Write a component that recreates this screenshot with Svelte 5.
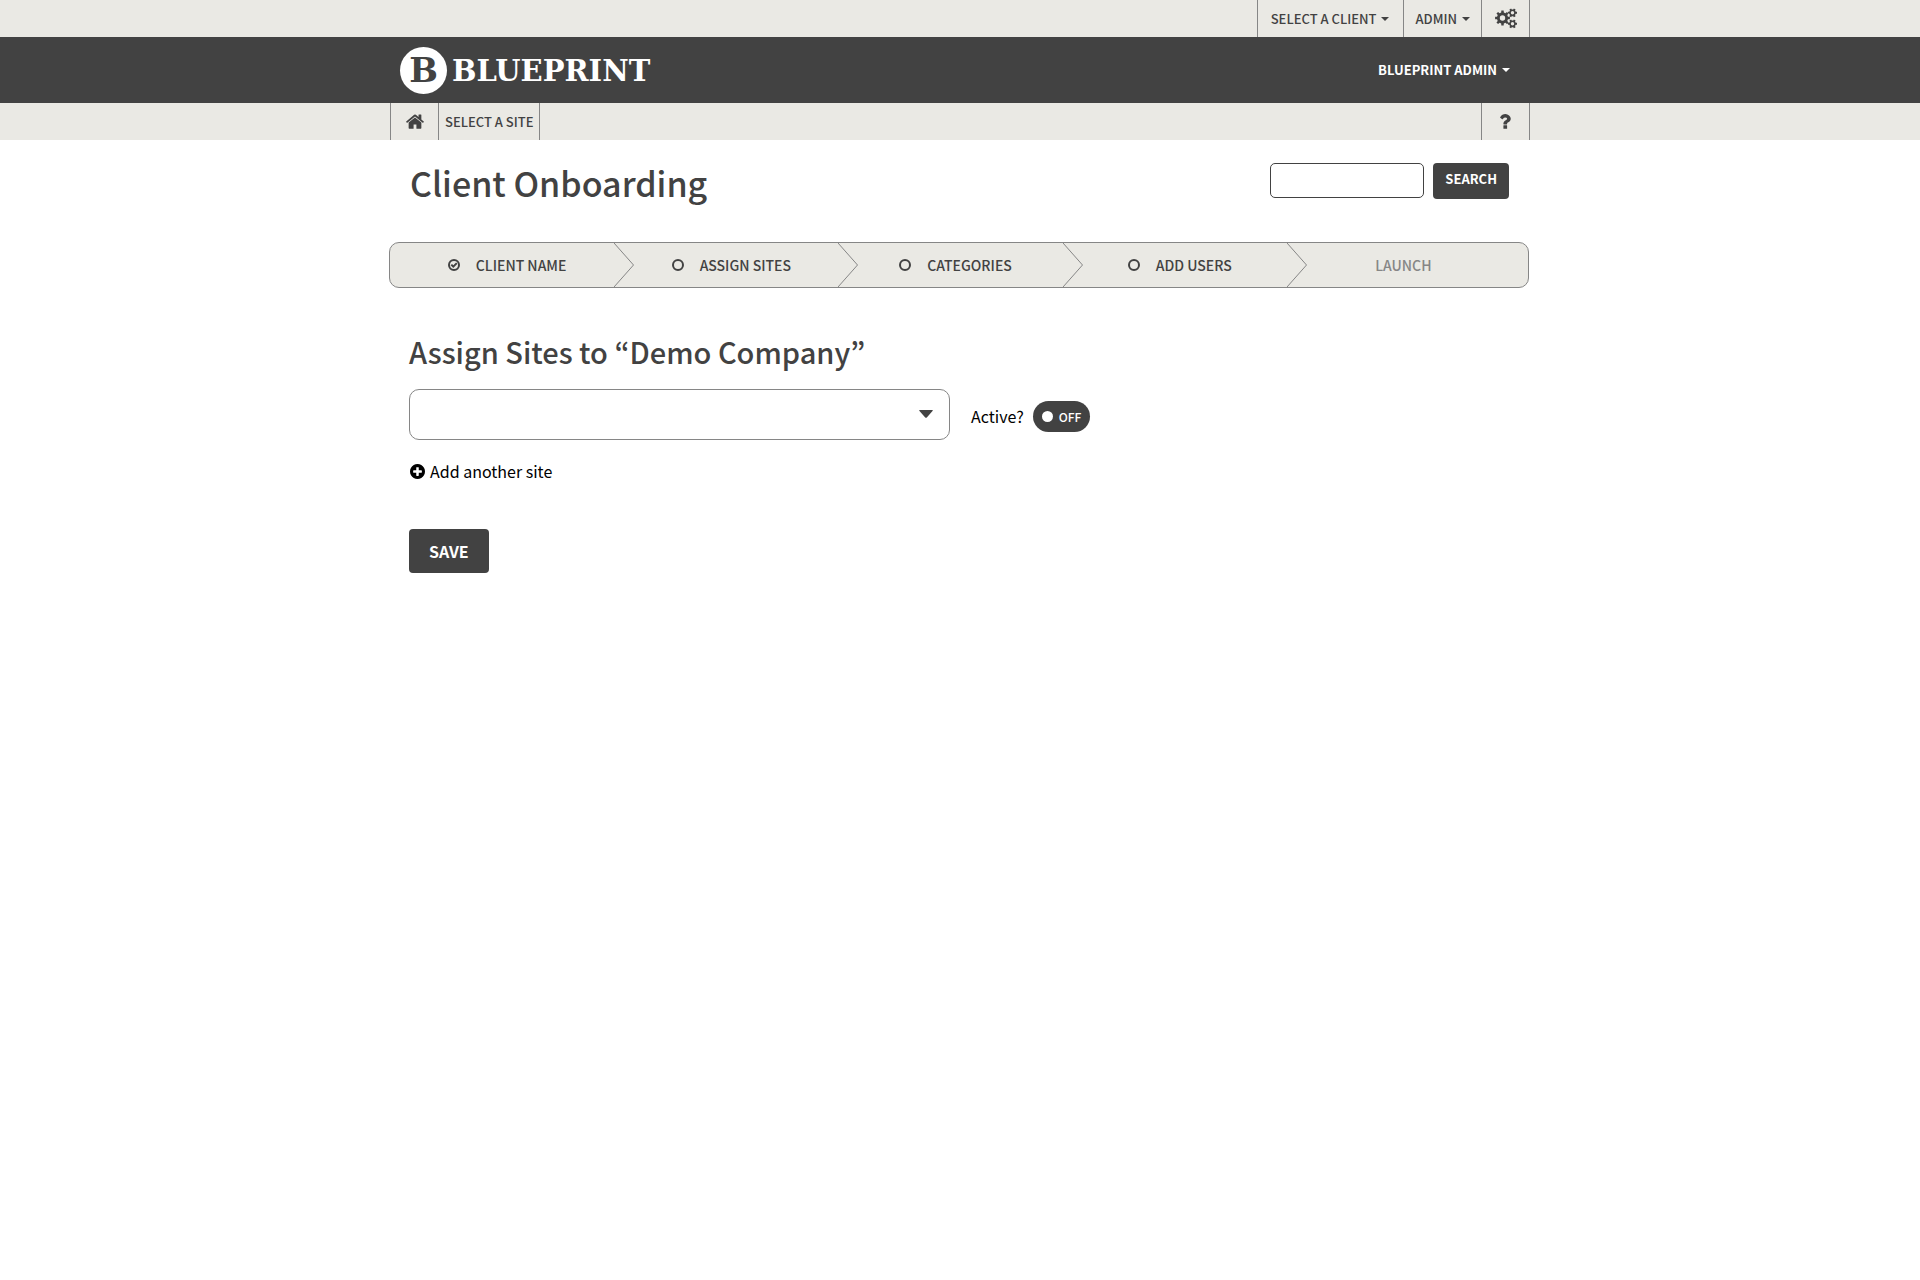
<script>
  const steps = [
    { label: 'Client Name', state: 'done' },
    { label: 'Assign Sites', state: 'open' },
    { label: 'Categories', state: 'open' },
    { label: 'Add Users', state: 'open' },
    { label: 'Launch', state: 'locked' }
  ];

  // Outline of a toothed wheel with a round hole, for an even-odd fill
  function gear(cx, cy, outer, inner, hole, teeth) {
    const pitch = (2 * Math.PI) / teeth;
    const at = (r, a) => `${(cx + r * Math.cos(a)).toFixed(2)} ${(cy + r * Math.sin(a)).toFixed(2)}`;
    const points = [];
    for (let i = 0; i < teeth; i++) {
      const a = i * pitch;
      points.push(at(inner, a - pitch * 0.3), at(outer, a - pitch * 0.2), at(outer, a + pitch * 0.2), at(inner, a + pitch * 0.3));
    }
    return `M${points.join('L')}ZM${cx - hole} ${cy}a${hole} ${hole} 0 1 0 ${hole * 2} 0a${hole} ${hole} 0 1 0 ${-hole * 2} 0Z`;
  }

  const cogs = gear(7.5, 9, 7.5, 5.6, 2.7, 8) + gear(17.5, 3.8, 4.6, 3.4, 1.7, 6) + gear(17.5, 14.8, 4.6, 3.4, 1.7, 6);

  let active = $state(false);
  let site = $state('');
  let query = $state('');
</script>

{#snippet caret()}
  <svg class="caret" viewBox="0 0 8 4" aria-hidden="true"><path d="M0 0h8L4 4z" /></svg>
{/snippet}

<div class="strip">
  <nav class="container cells end" aria-label="Account">
    <button class="cell client">Select a client {@render caret()}</button>
    <button class="cell admin">Admin {@render caret()}</button>
    <button class="cell square last" aria-label="Settings">
      <svg class="cogs" viewBox="-1 -1 23 21" aria-hidden="true"><path fill-rule="evenodd" d={cogs} /></svg>
    </button>
  </nav>
</div>

<header class="masthead">
  <div class="container brandrow">
    <a class="brand" href="#home">
      <span class="badge" aria-hidden="true">B</span>
      <span class="wordmark">BLUEPRINT</span>
    </a>
    <button class="user">Blueprint Admin {@render caret()}</button>
  </div>
</header>

<div class="strip">
  <nav class="container cells" aria-label="Site">
    <a class="cell square" href="#home" aria-label="Home">
      <svg class="home" viewBox="16 230 1632 1310" aria-hidden="true"><path d="M1408 992v480q0 26-19 45t-45 19h-384v-384h-256v384h-384q-26 0-45-19t-19-45v-480q0-1 .5-3t.5-3l575-474 575 474q1 2 1 6zm223-69l-62 74q-8 9-21 11h-3q-13 0-21-7l-692-577-692 577q-12 8-24 7-13-2-21-11l-62-74q-8-10-7-23.5t11-21.5l719-599q32-26 76-26t76 26l244 204v-195q0-14 9-23t23-9h192q14 0 23 9t9 23v408l219 182q10 8 11 21.5t-7 23.5z" /></svg>
    </a>
    <button class="cell site last">Select a site</button>
    <button class="cell square last help" aria-label="Help">
      <svg class="question" viewBox="100 200 930 1300" aria-hidden="true"><path d="M704 1208v240q0 16-12 28t-28 12h-240q-16 0-28-12t-12-28v-240q0-16 12-28t28-12h240q16 0 28 12t12 28zm316-600q0 54-15.500 101t-35 76.500-55 59.500-57.500 43.500-61 35.500q-41 23-68.500 65t-27.500 67q0 17-12 32.500t-28 15.500h-240q-15 0-25.500-18.500t-10.500-37.500v-45q0-83 65-156.500t143-108.500q59-27 84-56t25-76q0-42-46.500-74t-107.500-32q-65 0-108 29-35 25-107 115-13 16-31 16-12 0-25-8l-164-125q-13-10-15.500-25t5.500-28q160-266 464-266 80 0 161 31t146 83 106 127.500 41 158.500z" /></svg>
    </button>
  </nav>
</div>

<main class="container">
  <div class="titlebar">
    <h1>Client Onboarding</h1>
    <form class="search" onsubmit={(e) => e.preventDefault()}>
      <input type="search" aria-label="Search" bind:value={query} />
      <button>Search</button>
    </form>
  </div>

  <ol class="steps">
    {#each steps as step, i}
      <li class:locked={step.state === 'locked'}>
        <a href="#step-{i + 1}">
          {#if step.state !== 'locked'}
            <svg class="mark" viewBox="0 0 12 12" aria-hidden="true">
              <circle cx="6" cy="6" r="5" />
              {#if step.state === 'done'}<path d="M3.300 5.600l2 2 3.500-3.500" />{/if}
            </svg>
          {/if}
          {step.label}
        </a>
        {#if i < steps.length - 1}
          <svg class="chevron" viewBox="0 0 20 44" preserveAspectRatio="none" aria-hidden="true"><path d="M0 0l19.500 22L0 44" /></svg>
        {/if}
      </li>
    {/each}
  </ol>

  <form class="assign" onsubmit={(e) => e.preventDefault()}>
    <h2>Assign Sites to “Demo Company”</h2>
    <div class="row">
      <div class="picker">
        <select aria-label="Site" bind:value={site}><option value=""></option></select>
        <svg class="arrow" viewBox="0 0 14 8" aria-hidden="true"><path d="M.5 0h13q.5.300 0 1L8 7.300q-1 1-2 0L.5 1q-.5-.700 0-1z" /></svg>
      </div>
      <label for="active">Active?</label>
      <label class="toggle">
        <input id="active" type="checkbox" bind:checked={active} />
        <span>{active ? 'ON' : 'OFF'}</span>
      </label>
    </div>
    <button type="button" class="add">
      <svg viewBox="128 128 1536 1536" aria-hidden="true"><path d="M1344 960v-128q0-26-19-45t-45-19h-256v-256q0-26-19-45t-45-19h-128q-26 0-45 19t-19 45v256h-256q-26 0-45 19t-19 45v128q0 26 19 45t45 19h256v256q0 26 19 45t45 19h128q26 0 45-19t19-45v-256h256q26 0 45-19t19-45zm320-64q0 209-103 385.500t-279.500 279.500-385.500 103-385.500-103-279.500-279.500-103-385.500 103-385.500 279.500-279.500 385.500-103 385.500 103 279.500 279.500 103 385.500z" /></svg>
      Add another site
    </button>
    <button class="save">Save</button>
  </form>
</main>

<style>
  :global(body) {
    background: #fff;
    color: #424242;
    font-family: 'Noto Sans CJK JP', 'Noto Sans', sans-serif;
    font-size: 13px;
    line-height: 20px;
  }

  button, input, select {
    box-sizing: border-box;
    margin: 0;
    border: 0;
    padding: 0;
    background: none;
    color: inherit;
    font: inherit;
  }

  button { cursor: pointer; }
  a { color: inherit; text-decoration: none; }
  svg { display: block; flex: none; fill: currentColor; }

  .container {
    box-sizing: border-box;
    max-width: 1140px;
    margin: 0 auto;
  }

  .strip { background: #eae9e4; }

  .cells { display: flex; height: 37px; }
  .end { justify-content: flex-end; }

  .cell {
    box-sizing: border-box;
    display: flex;
    align-items: center;
    justify-content: center;
    gap: 5px;
    border-left: 1px solid #868686;
    font-weight: 500;
    text-transform: uppercase;
  }

  .last { border-right: 1px solid #868686; }
  .client { padding: 0 14px 0 13px; }
  .admin { padding: 0 11px; }
  .square { width: 48px; }
  .square.last { width: 49px; }
  .site { padding: 0 6px; }
  .help { margin-left: auto; }

  .caret { width: 8px; height: 4px; }
  .cogs { width: 23px; height: 21px; }
  .home { width: 18px; height: 15px; }
  .question { width: 11px; height: 15px; }

  .masthead { background: #424242; color: #fff; }

  .brandrow {
    display: flex;
    align-items: center;
    justify-content: space-between;
    height: 66px;
    padding: 0 20px 0 10px;
  }

  .brand {
    display: flex;
    align-items: center;
    gap: 5px;
    font-family: 'DejaVu Serif', serif;
    font-weight: 700;
  }

  .badge {
    display: flex;
    align-items: center;
    justify-content: center;
    width: 47px;
    height: 47px;
    border-radius: 50%;
    background: #fff;
    color: #424242;
    font-size: 34px;
  }

  .wordmark { padding-top: 2px; font-size: 29px; }

  .user {
    display: flex;
    align-items: center;
    gap: 5px;
    font-weight: 700;
    text-transform: uppercase;
  }

  .titlebar {
    display: flex;
    align-items: flex-start;
    justify-content: space-between;
    padding: 23px 21px 40px 20px;
  }

  h1, h2 { margin: 0; font-weight: 500; }
  h1 { padding-top: 1px; font-size: 34px; line-height: 38px; }
  h2 { font-size: 29px; line-height: 36px; }

  .search { display: flex; gap: 9px; }

  .search input {
    width: 154px;
    height: 35px;
    border: 1px solid #424242;
    border-radius: 5px;
    padding: 0 8px;
    appearance: none;
  }

  .search button {
    height: 36px;
    border-radius: 4px;
    padding: 0 12px 4px;
    background: #424242;
    color: #fff;
    font-weight: 700;
    text-transform: uppercase;
  }

  .steps {
    display: grid;
    grid-template-columns: repeat(4, 225fr) 242fr;
    margin: 0 1px 0 -1px;
    border: 1px solid #868686;
    border-radius: 10px;
    padding: 0;
    background: #eae9e4;
    font-size: 14px;
    font-weight: 500;
    list-style: none;
    text-transform: uppercase;
  }

  .steps li { position: relative; }

  .steps a {
    display: flex;
    align-items: center;
    justify-content: center;
    gap: 16px;
    height: 44px;
    padding-left: 10px;
  }

  .steps .locked a { padding: 0 8px 0 0; color: #868686; }

  .mark {
    width: 12px;
    height: 12px;
    fill: none;
    stroke: currentColor;
    stroke-width: 2;
  }

  .chevron {
    position: absolute;
    top: 0;
    left: 100%;
    width: 20px;
    height: 100%;
    fill: none;
    stroke: #868686;
  }

  .assign {
    display: flex;
    flex-direction: column;
    align-items: flex-start;
    padding: 45px 19px;
  }

  .row {
    display: flex;
    align-items: center;
    margin-top: 20px;
    color: #000;
    font-size: 16px;
  }

  .row label { padding-top: 2px; }

  .picker { position: relative; width: 541px; margin-right: 21px; }

  .picker select {
    display: block;
    width: 100%;
    height: 51px;
    border: 1px solid #868686;
    border-radius: 10px;
    padding: 0 40px 0 14px;
    background: #fff;
    appearance: none;
  }

  .arrow {
    position: absolute;
    top: 21px;
    right: 17px;
    width: 14px;
    height: 8px;
    color: #424242;
    pointer-events: none;
  }

  .row .toggle {
    box-sizing: border-box;
    display: flex;
    align-items: center;
    gap: 6px;
    height: 31px;
    margin: 4px 0 0 9px;
    border-radius: 16px;
    padding: 0 9px;
    background: #424242;
    color: #fff;
    font-size: 12px;
    font-weight: 500;
  }

  .toggle input {
    width: 11px;
    height: 11px;
    border-radius: 50%;
    background: #fff;
    appearance: none;
  }

  .add {
    display: flex;
    align-items: center;
    gap: 5px;
    margin: 21px 0 0 1px;
    color: #000;
    font-size: 16px;
  }

  .add svg { width: 15px; height: 15px; }

  .save {
    height: 44px;
    margin-top: 48px;
    border-radius: 4px;
    padding: 0 20px;
    background: #424242;
    color: #fff;
    font-size: 16px;
    font-weight: 700;
    text-transform: uppercase;
  }
</style>
